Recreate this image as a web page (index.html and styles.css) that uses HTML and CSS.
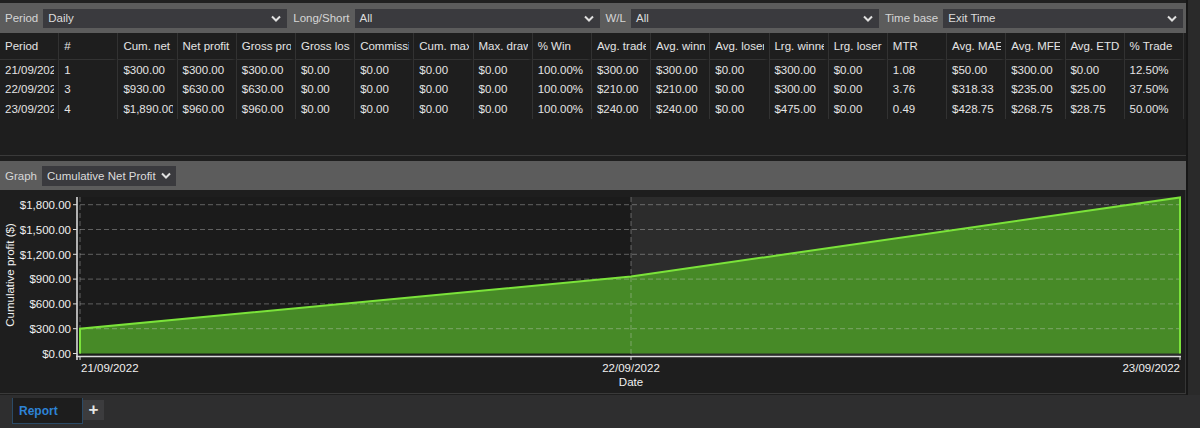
FILE: index.html
```html
<!DOCTYPE html>
<html lang="en">
<head>
  <meta charset="UTF-8">
  <title>Report</title>
  <link rel="stylesheet" href="styles.css">
</head>
<body>

<div class="app">
  <div class="main">

    <!-- filters -->
    <div class="filter-bar">
      <span class="bar-label">Period</span>
      <div class="dropdown dd-period">Daily<svg class="chev" width="10" height="7" viewBox="0 0 10 7"><polyline points="1,1.5 5,5.5 9,1.5"/></svg></div>
      <span class="bar-label">Long/Short</span>
      <div class="dropdown dd-side">All<svg class="chev" width="10" height="7" viewBox="0 0 10 7"><polyline points="1,1.5 5,5.5 9,1.5"/></svg></div>
      <span class="bar-label">W/L</span>
      <div class="dropdown dd-wl">All<svg class="chev" width="10" height="7" viewBox="0 0 10 7"><polyline points="1,1.5 5,5.5 9,1.5"/></svg></div>
      <span class="bar-label">Time base</span>
      <div class="dropdown dd-time">Exit Time<svg class="chev" width="10" height="7" viewBox="0 0 10 7"><polyline points="1,1.5 5,5.5 9,1.5"/></svg></div>
    </div>

    <!-- stats table -->
    <div class="grid-panel">
      <table class="grid">
        <thead>
          <tr>
            <th>Period</th><th>#</th><th>Cum. net</th><th>Net profit</th><th>Gross profit</th>
            <th>Gross loss</th><th>Commission</th><th>Cum. max</th><th>Max. draw</th><th>% Win</th>
            <th>Avg. trade</th><th>Avg. winner</th><th>Avg. loser</th><th>Lrg. winner</th><th>Lrg. loser</th>
            <th>MTR</th><th>Avg. MAE</th><th>Avg. MFE</th><th>Avg. ETD</th><th>% Trade</th>
          </tr>
        </thead>
        <tbody>
          <tr>
            <td>21/09/2022</td><td>1</td><td>$300.00</td><td>$300.00</td><td>$300.00</td>
            <td>$0.00</td><td>$0.00</td><td>$0.00</td><td>$0.00</td><td>100.00%</td>
            <td>$300.00</td><td>$300.00</td><td>$0.00</td><td>$300.00</td><td>$0.00</td>
            <td>1.08</td><td>$50.00</td><td>$300.00</td><td>$0.00</td><td>12.50%</td>
          </tr>
          <tr>
            <td>22/09/2022</td><td>3</td><td>$930.00</td><td>$630.00</td><td>$630.00</td>
            <td>$0.00</td><td>$0.00</td><td>$0.00</td><td>$0.00</td><td>100.00%</td>
            <td>$210.00</td><td>$210.00</td><td>$0.00</td><td>$300.00</td><td>$0.00</td>
            <td>3.76</td><td>$318.33</td><td>$235.00</td><td>$25.00</td><td>37.50%</td>
          </tr>
          <tr>
            <td>23/09/2022</td><td>4</td><td>$1,890.00</td><td>$960.00</td><td>$960.00</td>
            <td>$0.00</td><td>$0.00</td><td>$0.00</td><td>$0.00</td><td>100.00%</td>
            <td>$240.00</td><td>$240.00</td><td>$0.00</td><td>$475.00</td><td>$0.00</td>
            <td>0.49</td><td>$428.75</td><td>$268.75</td><td>$28.75</td><td>50.00%</td>
          </tr>
        </tbody>
      </table>
    </div>

    <!-- graph selector -->
    <div class="graph-bar">
      <span class="bar-label">Graph</span>
      <div class="dropdown dd-graph">Cumulative Net Profit<svg class="chev" width="10" height="7" viewBox="0 0 10 7"><polyline points="1,1.5 5,5.5 9,1.5"/></svg></div>
    </div>

    <!-- chart -->
    <div class="chart">
      <svg width="1185" height="203" viewBox="0 0 1185 203">
        <rect x="77" y="7" width="554" height="158" fill="#1b1b1b"/>
        <rect x="631" y="7" width="550" height="158" fill="#2c2c2c"/>

        <polygon points="80,163.5 80,138.7 631,86.5 1180,7.5 1180,163.5" fill="#478a27"/>

        <g class="gridline">
          <line x1="80" y1="138.7" x2="1180" y2="138.7"/>
          <line x1="80" y1="113.9" x2="1180" y2="113.9"/>
          <line x1="80" y1="89.1" x2="1180" y2="89.1"/>
          <line x1="80" y1="64.3" x2="1180" y2="64.3"/>
          <line x1="80" y1="39.5" x2="1180" y2="39.5"/>
          <line x1="80" y1="14.7" x2="1180" y2="14.7"/>
          <line x1="80" y1="7" x2="80" y2="166"/>
          <line x1="631" y1="7" x2="631" y2="166"/>
        </g>

        <polyline points="80,163.5 80,138.7 631,86.5 1180,7.5 1180,163.5" fill="none" stroke="#7be33a" stroke-width="2"/>

        <line x1="77" y1="7" x2="77" y2="170" stroke="#e4e4e4" stroke-width="1.5"/>
        <line x1="76" y1="166.5" x2="1181" y2="166.5" stroke="#dcdcdc" stroke-width="1.5"/>

        <g class="tick">
          <line x1="73" y1="163.5" x2="77" y2="163.5"/>
          <line x1="73" y1="138.7" x2="77" y2="138.7"/>
          <line x1="73" y1="113.9" x2="77" y2="113.9"/>
          <line x1="73" y1="89.1" x2="77" y2="89.1"/>
          <line x1="73" y1="64.3" x2="77" y2="64.3"/>
          <line x1="73" y1="39.5" x2="77" y2="39.5"/>
          <line x1="73" y1="14.7" x2="77" y2="14.7"/>
          <line x1="80" y1="166" x2="80" y2="170"/>
          <line x1="631" y1="166" x2="631" y2="170"/>
          <line x1="1180" y1="166" x2="1180" y2="170"/>
        </g>

        <g class="axis-text" text-anchor="end">
          <text x="71" y="168">$0.00</text>
          <text x="71" y="143">$300.00</text>
          <text x="71" y="118">$600.00</text>
          <text x="71" y="93">$900.00</text>
          <text x="71" y="68.5">$1,200.00</text>
          <text x="71" y="43.5">$1,500.00</text>
          <text x="71" y="19">$1,800.00</text>
        </g>

        <g class="axis-text">
          <text x="81" y="182">21/09/2022</text>
          <text x="631" y="182" text-anchor="middle">22/09/2022</text>
          <text x="1180" y="182" text-anchor="end">23/09/2022</text>
          <text x="631" y="196" text-anchor="middle">Date</text>
          <text x="14" y="85" text-anchor="middle" transform="rotate(-90 14 85)">Cumulative profit ($)</text>
        </g>
      </svg>
    </div>

  </div>
  <div class="side"></div>
</div>

<div class="tabs">
  <div class="tab tab-report">Report</div>
  <div class="tab tab-add">+</div>
</div>

</body>
</html>
```

FILE: styles.css
```css
body {
  margin: 0;
  width: 1200px;
  height: 428px;
  overflow: hidden;
  background: #2e2e2f;
  font-family: 'Liberation Sans', Arial, sans-serif;
  font-size: 11.5px;
  color: #e2e2e2;
}
.app {
  display: flex;
  height: 395px;
}
.main {
  width: 1186px;
  background: #1e1e1e;
  border-top: 3px solid #202020;
}
.side {
  flex: 1;
  background: #2a2a2a;
  border-left: 2px solid #171717;
}

/* filter bar */
.filter-bar, .graph-bar {
  display: flex;
  align-items: center;
  background: #5c5c5c;
  padding: 0 6px 0 5px;
}
.filter-bar {
  height: 30px;
}
.graph-bar {
  height: 29px;
  margin-top: 5px;
}
.bar-label {
  flex: none;
  white-space: nowrap;
  color: #d6d6d6;
  margin-right: 5px;
}
.dropdown {
  flex: none;
  display: flex;
  align-items: center;
  justify-content: space-between;
  box-sizing: border-box;
  height: 19px;
  background: #3a3a3e;
  color: #dcdcdc;
  white-space: nowrap;
  padding: 0 6px 0 5px;
  margin-right: 6px;
}
.dd-period { width: 244px; }
.dd-side { width: 245px; }
.dd-wl { width: 248px; }
.dd-time { width: 240px; margin-right: 0; }
.dd-graph {
  height: 20px;
  gap: 5px;
  padding-right: 5px;
}
.chev polyline {
  fill: none;
  stroke: #e0e0e0;
  stroke-width: 2;
}

/* table */
.grid-panel {
  height: 122px;
  border-bottom: 1px solid #3a3a3a;
  overflow: hidden;
}
.grid {
  width: 1184px;
  table-layout: fixed;
  border-collapse: separate;
  border-spacing: 0;
  background: repeating-linear-gradient(to right, transparent 0 58.2px, #323232 58.2px 59.2px);
}
.grid th, .grid td {
  text-align: left;
  font-weight: normal;
  white-space: nowrap;
  overflow: hidden;
  padding: 0 0 0 5px;
  border-right: 5px solid transparent;
  color: #e4e4e4;
}
.grid th {
  height: 26px;
  border-bottom: 1px solid #333;
}
.grid td {
  height: 19.5px;
}

/* chart */
.chart {
  height: 203px;
  border-right: 1px solid #363636;
  border-bottom: 1px solid #3a3a3a;
}
.chart svg {
  display: block;
}
.gridline line {
  stroke: rgba(210, 210, 210, 0.38);
  stroke-width: 1;
  stroke-dasharray: 5 3;
}
.tick line {
  stroke: #dcdcdc;
  stroke-width: 1;
}
.axis-text text {
  font-family: 'Liberation Sans', Arial, sans-serif;
  font-size: 11.5px;
  fill: #f0f0f0;
}

/* tabs */
.tabs {
  display: flex;
  align-items: flex-start;
  height: 33px;
  padding-left: 12px;
}
.tab {
  display: flex;
  align-items: center;
  box-sizing: border-box;
}
.tab-report {
  width: 71px;
  height: 26px;
  margin-top: 3px;
  padding-left: 6px;
  background: #1d1d1d;
  border: 1px solid #2b4a66;
  border-top: none;
  color: #2d83d6;
  font-weight: bold;
  font-size: 12px;
}
.tab-add {
  justify-content: center;
  width: 21px;
  height: 20px;
  margin-top: 5px;
  background: #3c3c3e;
  color: #e6e6e6;
  font-size: 17px;
  font-weight: bold;
}
```
